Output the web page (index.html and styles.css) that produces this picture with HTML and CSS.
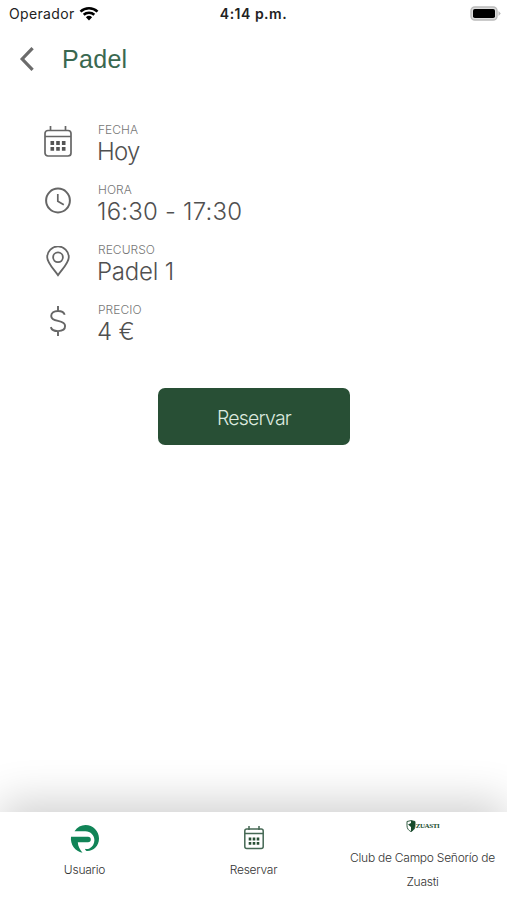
FILE: index.html
```html
<!DOCTYPE html>
<html lang="es">
<head>
    <meta charset="UTF-8">
    <meta name="viewport" content="width=device-width, initial-scale=1.0">
    <title>Padel</title>
    <link rel="stylesheet" href="styles.css">
</head>
<body>

<div class="status-bar">
    <div class="carrier">
        <span>Operador</span>
        <svg class="wifi" viewBox="0 0 20 15">
            <path d="M1.5 5.6a12.3 12.3 0 0 1 17 0M4.7 8.8a7.8 7.8 0 0 1 10.6 0" fill="none" stroke="#000" stroke-width="2.6"/>
            <path d="M6.9 11.2a4.5 4.5 0 0 1 6.2 0L10 14.4z"/>
        </svg>
    </div>
    <span class="time">4:14 p.m.</span>
    <svg class="battery" viewBox="0 0 32 16">
        <rect x="1" y="1" width="26" height="13" rx="3.8" fill="#ddd" stroke="#bbb" stroke-width="1.4"/>
        <rect x="3" y="3" width="22" height="9" rx="1.8"/>
        <path d="M28.5 5l2.3 2.500-2.300 2.500z" fill="#bbb"/>
    </svg>
</div>

<header class="header">
    <svg class="back" viewBox="0 0 16 24">
        <path d="M13.6 1.2L3.200 12l10.400 10.800" fill="none" stroke="#6b6b6b" stroke-width="3.2"/>
    </svg>
    <h1>Padel</h1>
</header>

<main class="details">
    <div class="row">
        <svg class="icon" viewBox="0 0 32 32">
            <g fill="none" stroke="#666" stroke-width="1.7">
                <rect x="3" y="4.500" width="26" height="25.500" rx="3"/>
                <path d="M3 10.500h26M8.500 0v5M23.500 0v5"/>
            </g>
            <path d="M8.5 17h3.600M14.200 17h3.600M19.900 17h3.600M8.500 22.800h3.600M14.200 22.800h3.600M19.900 22.800h3.600" fill="none" stroke="#555" stroke-width="3.800"/>
        </svg>
        <div class="info">
            <span class="label">FECHA</span>
            <span class="value day">Hoy</span>
        </div>
    </div>
    <div class="row">
        <svg class="icon" viewBox="0 0 32 32">
            <circle cx="16" cy="14.5" r="11.9" fill="none" stroke="#666" stroke-width="2"/>
            <path d="M15.800 8v7.200l6 3.600" fill="none" stroke="#666" stroke-width="1.700"/>
        </svg>
        <div class="info">
            <span class="label">HORA</span>
            <span class="value hours">16:30 - 17:30</span>
        </div>
    </div>
    <div class="row">
        <svg class="icon" viewBox="0 0 32 32">
            <g fill="none" stroke="#666" stroke-width="1.8">
                <path d="M16 29.200C12.200 23.600 5.200 16.900 5.200 11.200a10.800 10.800 0 0 1 21.600 0C26.800 16.900 19.800 23.600 16 29.200z"/>
                <circle cx="16" cy="11.300" r="4.900"/>
            </g>
        </svg>
        <div class="info">
            <span class="label">RECURSO</span>
            <span class="value">Padel 1</span>
        </div>
    </div>
    <div class="row">
        <svg class="icon" viewBox="0 0 32 32">
            <path d="M16 0v5M16 25v5M22.700 8.700C21.900 6.300 19.500 5 16 5c-4 0-6.800 1.900-6.800 4.900 0 3.200 2.700 4.200 6.800 5 4.200.8 7.100 1.900 7.100 5.200 0 3.100-2.900 5-7.100 5-3.800 0-6.400-1.400-7.200-4" fill="none" stroke="#666" stroke-width="1.900"/>
        </svg>
        <div class="info">
            <span class="label">PRECIO</span>
            <span class="value">4 €</span>
        </div>
    </div>
</main>

<button class="reserve-btn">Reservar</button>

<nav class="tabs">
    <div class="tab">
        <svg class="user-logo" viewBox="0 0 30 30">
            <path d="M4.500 7.300C7.200 3.100 11.200 1 15.500 1 23 1 29 7 29 14.500c0 7.500-5.500 12.500-11.600 12.500-1.200 0-2-.5-2.500-2.300 1.300.6 3 .5 4.500-.2 3-1.400 5-4.700 5-8.200 0-5-3.800-9-9-9z" fill="#118457"/>
            <path d="M1 12.700h17a2.800 2.800 0 0 1 0 5.600H7.800c.2 4.100 2 7.200 4.700 10.400C5.300 27.400 0 20.500 1 12.700z" fill="#118457"/>
        </svg>
        <span>Usuario</span>
    </div>
    <div class="tab">
        <svg class="calendar" viewBox="0 0 24 26">
            <g fill="none" stroke="#456854" stroke-width="1.5">
                <rect x="2.800" y="4" width="18.400" height="19.500" rx="2"/>
                <path d="M2.800 8.500h18.400M7 1v4M17 1v4"/>
            </g>
            <path d="M6.700 14h2.600M10.700 14h2.600M14.700 14h2.600M6.700 18.400h2.600M10.700 18.400h2.600M14.700 18.400h2.600" fill="none" stroke="#284f35" stroke-width="2.800"/>
        </svg>
        <span>Reservar</span>
    </div>
    <div class="tab club">
        <div class="club-logo">
            <svg viewBox="0 0 10 12">
                <path d="M1 1.500L5 .6l4 .9v4.200C9 8.600 7.400 10.400 5 11.600 2.600 10.400 1 8.600 1 5.700z" fill="#fff" stroke="#315b41" stroke-width="1"/>
                <path d="M5 .6l4 .9v4.200C9 8.600 7.400 10.400 5 11.600V7L2 4.500 5 3z" fill="#174b2c"/>
            </svg>
            <span class="club-name">ZUASTI</span>
        </div>
        <span>Club de Campo Señorío de Zuasti</span>
    </div>
</nav>

</body>
</html>
```
FILE: styles.css
```css
* {
    box-sizing: border-box;
}

body {
    margin: 0;
    height: 900px;
    display: flex;
    flex-direction: column;
    overflow: hidden;
    background-color: #fff;
    font-family: Inter, "Liberation Sans", sans-serif;
    font-weight: 300;
    color: #444;
}

svg {
    display: block;
    flex-shrink: 0;
}

/* Status bar */
.status-bar {
    display: grid;
    grid-template-columns: 1fr auto 1fr;
    align-items: center;
    height: 27px;
    padding: 0 5px 0 9px;
    font-size: 14px;
    font-weight: 400;
    color: #222;
}

.carrier {
    display: flex;
    align-items: center;
    gap: 4px;
    letter-spacing: 0.35px;
}

.wifi {
    width: 20px;
    height: 15px;
}

.time {
    margin-right: 4px;
    font-weight: 600;
    letter-spacing: 0.5px;
}

.battery {
    width: 32px;
    height: 16px;
    justify-self: end;
}

/* Header */
.header {
    display: flex;
    align-items: center;
    height: 64px;
    padding-left: 19px;
    gap: 27px;
}

.back {
    width: 16px;
    height: 24px;
}

.header h1 {
    margin: 0;
    font-family: "Liberation Sans", sans-serif;
    font-size: 25px;
    font-weight: 400;
    letter-spacing: 0.3px;
    color: #3a6850;
}

/* Booking details */
.details {
    padding: 30px 0 0 42px;
}

.row {
    display: flex;
    height: 60px;
    gap: 23px;
}

.icon {
    width: 32px;
    height: 32px;
    margin-top: 5px;
}

.info {
    display: flex;
    flex-direction: column;
}

.label {
    padding-left: 1px;
    font-size: 12px;
    line-height: 18px;
    letter-spacing: 0.05px;
    color: #777;
}

.value {
    font-size: 24px;
    line-height: 26px;
    letter-spacing: -0.2px;
    color: #505050;
}

.day {
    letter-spacing: -0.8px;
}

.hours {
    letter-spacing: 0.2px;
}

/* Reserve button */
.reserve-btn {
    width: 192px;
    height: 57px;
    margin: 27px 0 0 158px;
    padding-top: 3px;
    border: none;
    border-radius: 7px;
    background-color: #284f35;
    color: #dce9df;
    font-family: inherit;
    font-size: 19.5px;
    font-weight: 300;
    letter-spacing: -0.8px;
}

/* Tab bar */
.tabs {
    display: grid;
    grid-template-columns: repeat(3, 1fr);
    height: 88px;
    margin-top: auto;
    background-color: #fff;
    box-shadow: 0 -10px 44px rgba(0, 0, 0, 0.19);
}

.tab {
    display: flex;
    flex-direction: column;
    align-items: center;
    padding-top: 12px;
    font-size: 12px;
    line-height: 24px;
    letter-spacing: -0.25px;
    text-align: center;
    color: #333;
}

.user-logo {
    width: 30px;
    height: 30px;
    margin-bottom: 4px;
}

.calendar {
    width: 24px;
    height: 26px;
    margin: 1px 0 7px;
}

.club {
    padding: 8px 8px 0;
}

.club-logo {
    display: flex;
    align-items: center;
    height: 12px;
    margin-bottom: 14px;
}

.club-logo svg {
    width: 10px;
    height: 12px;
}

.club-name {
    font-family: "Liberation Serif", serif;
    font-size: 7px;
    font-weight: 700;
    line-height: 8px;
    letter-spacing: -0.4px;
    color: #174b2c;
}
```
